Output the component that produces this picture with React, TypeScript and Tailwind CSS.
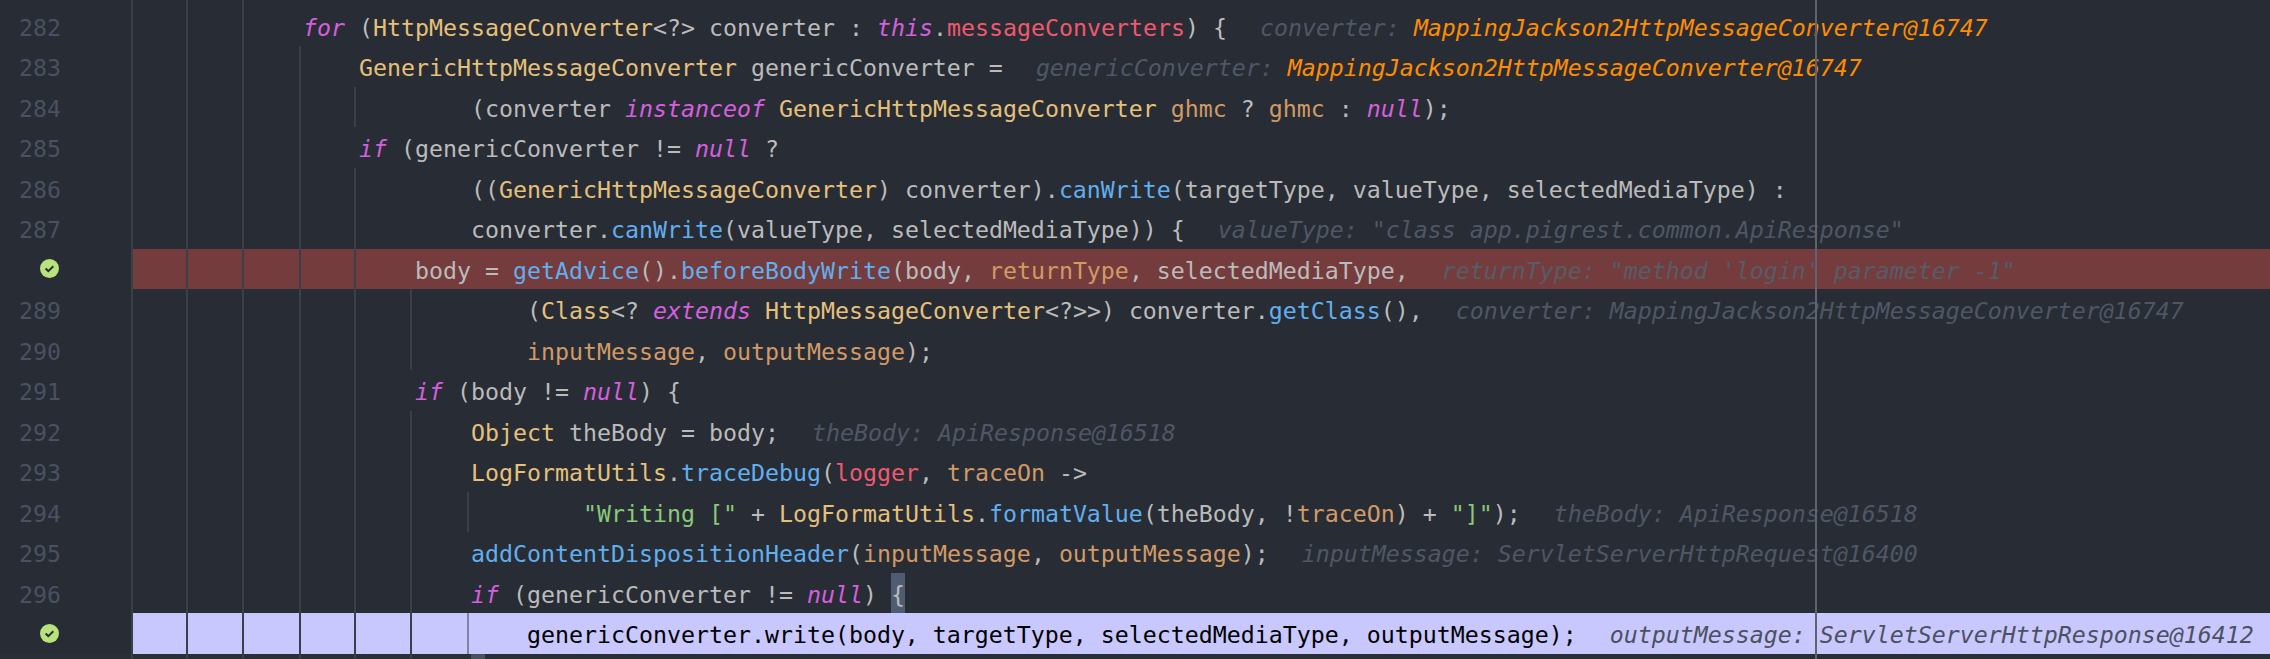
import React from "react";

type Seg = [string, string];
const P = "text-[#bbbbbb]";
const K = "text-[#d55fde] italic";
const C = "text-[#e5c07b]";
const M = "text-[#61afef]";
const F = "text-[#ef596f]";
const L = "text-[#d19a66]";
const S = "text-[#89ca78]";
const H = "text-[#4f5766] italic";
const O = "text-[#ff8c00] italic";

type Row = {
  n: number;
  ind: number;
  code: Seg[];
  hint?: Seg[];
  guides: number[];
  kind?: "red" | "blue";
};

const G3 = [131, 186, 242];
const rows: Row[] = [
  { n: 282, ind: 12, guides: G3, code: [[K, "for"], [P, " ("], [C, "HttpMessageConverter"], [P, "<?> converter : "], [K, "this"], [P, "."], [F, "messageConverters"], [P, ") {"]], hint: [[H, "converter: "], [O, "MappingJackson2HttpMessageConverter@16747"]] },
  { n: 283, ind: 16, guides: [...G3, 299], code: [[C, "GenericHttpMessageConverter"], [P, " genericConverter ="]], hint: [[H, "genericConverter: "], [O, "MappingJackson2HttpMessageConverter@16747"]] },
  { n: 284, ind: 24, guides: [...G3, 299, 354], code: [[P, "(converter "], [K, "instanceof"], [P, " "], [C, "GenericHttpMessageConverter"], [P, " "], [L, "ghmc"], [P, " ? "], [L, "ghmc"], [P, " : "], [K, "null"], [P, ");"]] },
  { n: 285, ind: 16, guides: [...G3, 299], code: [[K, "if"], [P, " (genericConverter != "], [K, "null"], [P, " ?"]] },
  { n: 286, ind: 24, guides: [...G3, 299, 354], code: [[P, "(("], [C, "GenericHttpMessageConverter"], [P, ") converter)."], [M, "canWrite"], [P, "(targetType, valueType, selectedMediaType) :"]] },
  { n: 287, ind: 24, guides: [...G3, 299, 354], code: [[P, "converter."], [M, "canWrite"], [P, "(valueType, selectedMediaType)) {"]], hint: [[H, "valueType: \"class app.pigrest.common.ApiResponse\""]] },
  { n: 288, ind: 20, kind: "red", guides: [...G3, 299, 354], code: [[P, "body = "], [M, "getAdvice"], [P, "()."], [M, "beforeBodyWrite"], [P, "(body, "], [L, "returnType"], [P, ", selectedMediaType,"]], hint: [["text-[#575c68] italic", "returnType: \"method 'login' parameter -1\""]] },
  { n: 289, ind: 28, guides: [...G3, 299, 354, 410], code: [[P, "("], [C, "Class"], [P, "<? "], [K, "extends"], [P, " "], [C, "HttpMessageConverter"], [P, "<?>>) converter."], [M, "getClass"], [P, "(),"]], hint: [[H, "converter: MappingJackson2HttpMessageConverter@16747"]] },
  { n: 290, ind: 28, guides: [...G3, 299, 354, 410], code: [[L, "inputMessage"], [P, ", "], [L, "outputMessage"], [P, ");"]] },
  { n: 291, ind: 20, guides: [...G3, 299, 354], code: [[K, "if"], [P, " (body != "], [K, "null"], [P, ") {"]] },
  { n: 292, ind: 24, guides: [...G3, 299, 354, 410], code: [[C, "Object"], [P, " theBody = body;"]], hint: [[H, "theBody: ApiResponse@16518"]] },
  { n: 293, ind: 24, guides: [...G3, 299, 354, 410], code: [[C, "LogFormatUtils"], [P, "."], [M, "traceDebug"], [P, "("], [F, "logger"], [P, ", "], [L, "traceOn"], [P, " ->"]] },
  { n: 294, ind: 32, guides: [...G3, 299, 354, 410, 467], code: [[S, "\"Writing [\""], [P, " + "], [C, "LogFormatUtils"], [P, "."], [M, "formatValue"], [P, "(theBody, !"], [L, "traceOn"], [P, ") + "], [S, "\"]\""], [P, ");"]], hint: [[H, "theBody: ApiResponse@16518"]] },
  { n: 295, ind: 24, guides: [...G3, 299, 354, 410], code: [[M, "addContentDispositionHeader"], [P, "("], [L, "inputMessage"], [P, ", "], [L, "outputMessage"], [P, ");"]], hint: [[H, "inputMessage: ServletServerHttpRequest@16400"]] },
  { n: 296, ind: 24, guides: [...G3, 299, 354, 410], code: [[K, "if"], [P, " (genericConverter != "], [K, "null"], [P, ") "], ["text-[#bbbbbb] bg-[#4f5b70]", "{"]] },
  { n: 297, ind: 28, kind: "blue", guides: [...G3, 299, 354, 410, 467], code: [["text-black", "genericConverter.write(body, targetType, selectedMediaType, outputMessage);"]], hint: [["text-[#4c5160] italic", "outputMessage: ServletServerHttpResponse@16412"]] },
];

function Check() {
  return (
    <svg width="19" height="19" viewBox="0 0 19 19" className="block">
      <circle cx="9.5" cy="9.5" r="9.5" fill="#b8e27c" />
      <path d="M5.6 9.6 L8.3 12.1 L13.3 7.3" fill="none" stroke="#282c34" strokeWidth="2" />
    </svg>
  );
}

function Guides({ xs, blue }: { xs: number[]; blue?: boolean }) {
  return (
    <>
      {xs.map((x) => (
        <span
          key={x}
          className={
            "absolute top-0 bottom-0 w-[2px] " +
            (blue && x === 467 ? "bg-[#7d86a0]" : "bg-[#3b4048]")
          }
          style={{ left: x }}
        />
      ))}
    </>
  );
}

const cell = "h-[40.5px] leading-[44px]";

function CodeRow({ r }: { r: Row }) {
  const bg = r.kind === "red" ? "bg-[#743c3c]" : r.kind === "blue" ? "bg-[#c8c8ff]" : "";
  return (
    <div className="relative flex h-[40.5px]">
      <div className="w-[132px] h-full shrink-0 flex items-center bg-[#282c34]">
        {r.kind ? (
          <div className="pl-[40px]">
            <Check />
          </div>
        ) : (
          <div className={"w-[61px] text-right text-[#495162] " + cell}>{r.n}</div>
        )}
      </div>
      <div className={"flex-1 h-full flex items-start pl-[3px] whitespace-pre " + bg}>
        <span className={cell}>{" ".repeat(r.ind)}</span>
        {r.code.map((s, i) => (
          <span key={i} className={s[0] + " " + cell}>
            {s[1]}
          </span>
        ))}
        {r.hint && (
          <span className={"ml-[33px] " + cell}>
            {r.hint.map((s, i) => (
              <span key={i} className={s[0]}>
                {s[1]}
              </span>
            ))}
          </span>
        )}
      </div>
      <Guides xs={r.guides} blue={r.kind === "blue"} />
    </div>
  );
}

export default function App() {
  return (
    <div className="relative w-[2270px] h-[659px] overflow-hidden bg-[#282c34] font-['DejaVu_Sans_Mono',monospace] text-[23.25px]">
      <div className="relative h-[5.5px]">
        <Guides xs={G3} />
      </div>
      {rows.map((r) => (
        <CodeRow key={r.n} r={r} />
      ))}
      <div className="relative h-[6px] bg-[#2a2e37]">
        <Guides xs={[...G3, 299, 354, 410]} />
        <span className="absolute left-[471px] top-0 bottom-0 w-[14px] bg-[#4a5160]" />
      </div>
      <div className="absolute left-[1815px] top-0 bottom-0 w-[2px] bg-[#5f636b]" />
    </div>
  );
}
